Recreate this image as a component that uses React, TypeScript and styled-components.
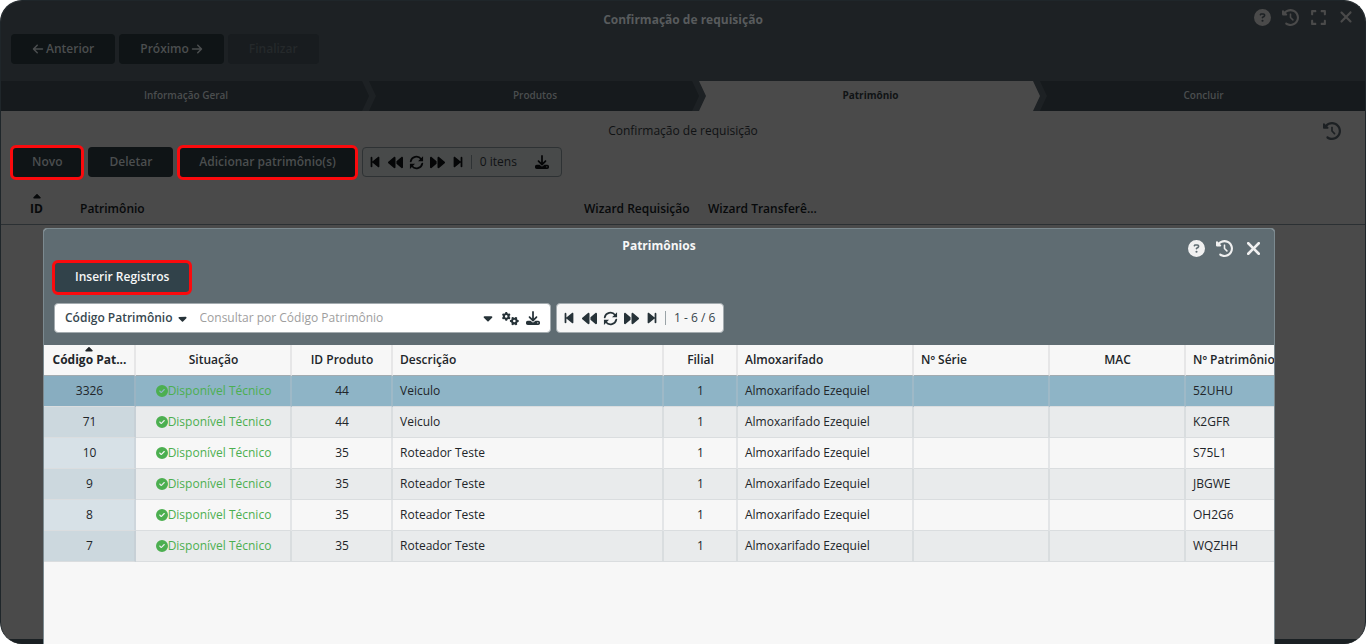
import React from 'react';
import styled, { createGlobalStyle, css } from 'styled-components';
import {
  FaArrowLeft,
  FaArrowRight,
  FaBackward,
  FaBackwardStep,
  FaCaretDown,
  FaCaretUp,
  FaCircleCheck,
  FaCircleQuestion,
  FaClockRotateLeft,
  FaDownload,
  FaExpand,
  FaForward,
  FaForwardStep,
  FaGears,
  FaXmark,
} from 'react-icons/fa6';

const GlobalStyle = createGlobalStyle`
  *, *::before, *::after { box-sizing: border-box; }
  body {
    margin: 0;
    background: #fff;
    font-family: "Open Sans", "Noto Sans", sans-serif;
    font-size: 12px;
    line-height: 16px;
  }
  button, input, select { font: inherit; }
`;

const Screen = styled.main`
  position: relative;
  display: flex;
  flex-direction: column;
  height: 100vh;
  overflow: hidden;
  border: 1px solid #1f262a;
  border-bottom: 0;
  border-radius: 22px;
  background: #4a4a4a;
`;

const BottomStrip = styled.div`
  flex: none;
  height: 5px;
  margin-top: auto;
  background: #1a2023;
`;

const Header = styled.header`
  position: relative;
  flex: none;
  height: 80px;
  padding: 11px 10px 10px;
  background: #1d2124;
`;

const HeaderTitle = styled.h1`
  margin: 0 0 6px;
  color: #585b5d;
  font-size: 12px;
  font-weight: 700;
  line-height: 16px;
  text-align: center;
`;

const IconButton = styled.button`
  display: flex;
  align-items: center;
  justify-content: center;
  flex: none;
  padding: 0;
  border: 0;
  background: none;
  color: inherit;
`;

const WindowIcons = styled.div<{ $tone: string; $top: number; $right: number }>`
  position: absolute;
  top: ${(p) => p.$top}px;
  right: ${(p) => p.$right}px;
  display: flex;
  align-items: center;
  gap: 10px;
  color: ${(p) => p.$tone};
  ${IconButton} { min-width: 18px; }
`;

const ButtonRow = styled.div<{ $gap?: number }>`
  display: flex;
  gap: ${(p) => p.$gap ?? 4}px;
`;

const highlight = css<{ $bright?: boolean }>`
  &::after {
    content: '';
    position: absolute;
    inset: -2px ${(p) => (p.$bright ? -2 : -1)}px -3px;
    border: 3px solid #fb0a0d;
    border-radius: 6px;
  }
`;

const ActionButton = styled.button<{ $marked?: boolean; $bright?: boolean }>`
  position: relative;
  display: flex;
  align-items: center;
  justify-content: center;
  gap: 2px;
  height: 30px;
  padding: 0 21px;
  border: 0;
  border-radius: 4px;
  background: ${(p) => (p.$bright ? '#31424a' : '#0f1416')};
  color: ${(p) => (p.$bright ? '#f7f7f7' : '#4b4e4f')};
  font-weight: 600;
  white-space: nowrap;
  &:disabled {
    background: #181c1f;
    color: #25292b;
  }
  ${(p) => p.$marked && highlight}
`;

const Steps = styled.ol`
  display: grid;
  grid-template-columns: 368fr 330fr 341fr 325fr;
  flex: none;
  height: 30px;
  margin: 0;
  padding: 0;
  list-style: none;
`;

const Step = styled.li<{ $current?: boolean }>`
  position: relative;
  display: flex;
  align-items: center;
  justify-content: center;
  padding: 0 0 2px 2px;
  background: ${(p) => (p.$current ? '#4a4a4a' : '#161a1d')};
  color: ${(p) => (p.$current ? '#101315' : '#4b4e4f')};
  font-size: 10px;
  font-weight: ${(p) => (p.$current ? 700 : 600)};
  &:not(:last-child)::after {
    content: '';
    position: absolute;
    z-index: 1;
    top: 0;
    right: -7px;
    width: 14px;
    height: 30px;
    background: #1d2124;
    clip-path: polygon(0 0, 50% 0, 100% 50%, 50% 100%, 0 100%, 50% 50%);
  }
`;

const SectionBar = styled.div`
  position: relative;
  flex: none;
  padding: 12px 0 8px;
  color: #101214;
  text-align: center;
`;

const Toolbar = styled.div`
  display: flex;
  flex: none;
  gap: 5px;
  padding: 0 10px;
`;

const Pager = styled.div<{ $dim?: boolean }>`
  display: flex;
  align-items: center;
  height: 30px;
  padding: 0 8px 0 5px;
  gap: 6px;
  border: 1px solid ${(p) => (p.$dim ? '#2e3234' : '#a3abaf')};
  border-radius: 4px;
  background: ${(p) => (p.$dim ? '#484a4a' : '#f7f7f7')};
  color: ${(p) => (p.$dim ? '#050607' : '#263238')};
`;

const PagerCount = styled.span<{ $dim?: boolean }>`
  display: flex;
  align-items: center;
  color: ${(p) => (p.$dim ? '#101214' : '#37454c')};
  white-space: nowrap;
  &::before {
    content: '';
    width: 1px;
    height: 14px;
    margin-right: 8px;
    background: ${(p) => (p.$dim ? '#2e3234' : '#9aa3a7')};
  }
`;

const DownloadSlot = styled.span`
  display: flex;
  padding: 0 4px 0 12px;
`;

const BackTable = styled.table`
  flex: none;
  width: 100%;
  margin-top: 12px;
  table-layout: fixed;
  border-collapse: collapse;
  border-bottom: 1px solid #2b3033;
  color: #07090a;
`;

const BackHead = styled.th<{ $w?: number; $center?: boolean }>`
  position: relative;
  width: ${(p) => (p.$w ? `${p.$w}px` : 'auto')};
  height: 35px;
  padding: 5px 8px 0;
  font-weight: ${(p) => (p.$center ? 700 : 600)};
  text-align: ${(p) => (p.$center ? 'center' : 'left')};
  white-space: nowrap;
`;

const SortMark = styled.span<{ $top: number }>`
  position: absolute;
  top: ${(p) => p.$top}px;
  left: 0;
  right: 0;
  display: flex;
  justify-content: center;
`;

const Dialog = styled.section`
  position: absolute;
  z-index: 2;
  inset: 227px 90px 0 42px;
  display: flex;
  flex-direction: column;
  overflow: hidden;
  border: 1px solid #7c8a90;
  border-bottom: 0;
  border-radius: 4px 4px 0 0;
  background: #f7f7f7;
`;

const DialogHead = styled.header`
  position: relative;
  display: flex;
  flex-direction: column;
  flex: none;
  height: 116px;
  padding: 9px 10px 0;
  background: #5f6c72;
`;

const DialogTitle = styled.h2`
  margin: 0 0 8px;
  color: #f7f7f7;
  font-size: 12px;
  font-weight: 700;
  line-height: 16px;
  text-align: center;
`;

const SearchRow = styled.form`
  display: flex;
  gap: 5px;
  margin-top: 11px;
`;

const SearchBox = styled.div`
  display: flex;
  align-items: center;
  gap: 7px;
  width: 497px;
  height: 30px;
  padding: 0 10px;
  border: 1px solid #a3abaf;
  border-radius: 4px;
  background: #fff;
  color: #263238;
`;

const FieldPicker = styled.label`
  display: flex;
  align-items: center;
  flex: none;
  gap: 3px;
`;

const FieldSelect = styled.select`
  appearance: none;
  field-sizing: content;
  padding: 0;
  border: 0;
  background: none;
  color: #37474f;
  font-weight: 600;
`;

const SearchInput = styled.input`
  flex: 1;
  min-width: 0;
  padding: 0 4px;
  border: 0;
  outline: 0;
  background: none;
  color: #263238;
  &::placeholder {
    color: #9e9e9e;
    opacity: 1;
  }
`;

const DataTable = styled.table`
  flex: none;
  width: 1300px;
  table-layout: fixed;
  border-collapse: separate;
  border-spacing: 0;
  color: #212529;
`;

const DataHead = styled.th<{ $center?: boolean; $sorted?: boolean; $w: number }>`
  position: relative;
  width: ${(p) => p.$w}px;
  height: 31px;
  padding: 0 ${(p) => (p.$center ? 6 : 7)}px 0 7px;
  border-right: 2px solid #e6e6e7;
  border-bottom: 1px solid #a2abb0;
  font-weight: ${(p) => (p.$sorted ? 700 : 600)};
  text-align: ${(p) => (p.$center ? 'center' : 'left')};
  white-space: nowrap;
`;

const DataCell = styled.td<{ $center?: boolean }>`
  height: 31px;
  padding: 0 ${(p) => (p.$center ? 6 : 7)}px 0 7px;
  border-right: 2px solid rgba(190, 196, 200, 0.35);
  border-bottom: 1px solid #dadddf;
  text-align: ${(p) => (p.$center ? 'center' : 'left')};
  white-space: nowrap;
`;

const DataRow = styled.tr`
  background: #f7f7f7;
  & > td:first-child { background: #d7e1e7; }
  &:nth-child(even) { background: #e9ebec; }
  &:nth-child(even) > td:first-child { background: #ccd8de; }
  &:first-child { background: #8eb4c6; }
  &:first-child > td:first-child { background: #88adc0; }
`;

const Status = styled.span`
  display: flex;
  align-items: center;
  justify-content: center;
  color: #4caf50;
`;

const columns = [
  { label: 'Código Pat...', width: 92, center: true, sorted: true },
  { label: 'Situação', width: 156, center: true },
  { label: 'ID Produto', width: 101, center: true },
  { label: 'Descrição', width: 271 },
  { label: 'Filial', width: 74, center: true },
  { label: 'Almoxarifado', width: 176 },
  { label: 'Nº Série', width: 136 },
  { label: 'MAC', width: 136, center: true },
  { label: 'Nº Patrimônio', width: 158 },
];

const assets = [
  { code: '3326', product: '44', name: 'Veiculo', tag: '52UHU' },
  { code: '71', product: '44', name: 'Veiculo', tag: 'K2GFR' },
  { code: '10', product: '35', name: 'Roteador Teste', tag: 'S75L1' },
  { code: '9', product: '35', name: 'Roteador Teste', tag: 'JBGWE' },
  { code: '8', product: '35', name: 'Roteador Teste', tag: 'OH2G6' },
  { code: '7', product: '35', name: 'Roteador Teste', tag: 'WQZHH' },
];

const RefreshIcon = () => (
  <svg width="15" height="15" viewBox="0 0 16 16" aria-hidden="true">
    <path
      d="M1.8 6.9A6.3 6.3 0 0 1 12.9 4.2M14.2 9.1A6.3 6.3 0 0 1 3.1 11.8"
      fill="none"
      stroke="currentColor"
      strokeWidth="1.8"
      strokeLinecap="round"
    />
    <path d="M15 1.2V6.6H9.6ZM1 14.8V9.4H6.4Z" fill="currentColor" />
  </svg>
);

const PagerButtons = () => (
  <>
    <IconButton type="button" aria-label="Primeira página"><FaBackwardStep size={14} /></IconButton>
    <IconButton type="button" aria-label="Página anterior"><FaBackward size={15} /></IconButton>
    <IconButton type="button" aria-label="Atualizar"><RefreshIcon /></IconButton>
    <IconButton type="button" aria-label="Próxima página"><FaForward size={15} /></IconButton>
    <IconButton type="button" aria-label="Última página"><FaForwardStep size={14} /></IconButton>
  </>
);

export default function App() {
  return (
    <>
      <GlobalStyle />
      <Screen>
        <Header>
          <HeaderTitle>Confirmação de requisição</HeaderTitle>
          <WindowIcons $tone="#4a4a4a" $top={7} $right={10}>
            <IconButton type="button" aria-label="Ajuda"><FaCircleQuestion size={17} /></IconButton>
            <IconButton type="button" aria-label="Histórico"><FaClockRotateLeft size={17} /></IconButton>
            <IconButton type="button" aria-label="Expandir"><FaExpand size={17} /></IconButton>
            <IconButton type="button" aria-label="Fechar"><FaXmark size={18} /></IconButton>
          </WindowIcons>
          <ButtonRow>
            <ActionButton type="button"><FaArrowLeft size={12} />Anterior</ActionButton>
            <ActionButton type="button">Próximo<FaArrowRight size={12} /></ActionButton>
            <ActionButton type="button" disabled>Finalizar</ActionButton>
          </ButtonRow>
        </Header>
        <Steps>
          <Step>Informação Geral</Step>
          <Step>Produtos</Step>
          <Step $current aria-current="step">Patrimônio</Step>
          <Step>Concluir</Step>
        </Steps>
        <SectionBar>
          Confirmação de requisição
          <WindowIcons $tone="#1c2023" $top={11} $right={24}>
            <IconButton type="button" aria-label="Histórico do registro"><FaClockRotateLeft size={18} /></IconButton>
          </WindowIcons>
        </SectionBar>
        <Toolbar>
          <ButtonRow $gap={5}>
            <ActionButton type="button" $marked>Novo</ActionButton>
            <ActionButton type="button">Deletar</ActionButton>
            <ActionButton type="button" $marked>Adicionar patrimônio(s)</ActionButton>
          </ButtonRow>
          <Pager $dim>
            <PagerButtons />
            <PagerCount $dim>0 itens</PagerCount>
            <DownloadSlot>
              <IconButton type="button" aria-label="Exportar"><FaDownload size={14} /></IconButton>
            </DownloadSlot>
          </Pager>
        </Toolbar>
        <BackTable>
          <thead>
            <tr>
              <BackHead $w={71} $center><SortMark $top={2}><FaCaretUp size={12} /></SortMark>ID</BackHead>
              <BackHead $w={504}>Patrimônio</BackHead>
              <BackHead $w={124}>Wizard Requisição</BackHead>
              <BackHead $w={125}>Wizard Transferê...</BackHead>
              <BackHead aria-hidden="true" />
            </tr>
          </thead>
        </BackTable>
        <BottomStrip />
        <Dialog role="dialog" aria-label="Patrimônios">
          <DialogHead>
            <DialogTitle>Patrimônios</DialogTitle>
            <WindowIcons $tone="#f0f0f0" $top={9} $right={10}>
              <IconButton type="button" aria-label="Ajuda"><FaCircleQuestion size={17} /></IconButton>
              <IconButton type="button" aria-label="Histórico"><FaClockRotateLeft size={17} /></IconButton>
              <IconButton type="button" aria-label="Fechar"><FaXmark size={21} /></IconButton>
            </WindowIcons>
            <ButtonRow>
              <ActionButton type="button" $marked $bright>Inserir Registros</ActionButton>
            </ButtonRow>
            <SearchRow>
              <SearchBox>
                <FieldPicker>
                  <FieldSelect aria-label="Campo de busca" defaultValue="codigo">
                    <option value="codigo">Código Patrimônio</option>
                  </FieldSelect>
                  <FaCaretDown size={13} />
                </FieldPicker>
                <SearchInput aria-label="Consultar" placeholder="Consultar por Código Patrimônio" />
                <IconButton type="button" aria-label="Opções"><FaCaretDown size={14} /></IconButton>
                <IconButton type="button" aria-label="Configurações"><FaGears size={17} /></IconButton>
                <IconButton type="button" aria-label="Exportar"><FaDownload size={14} /></IconButton>
              </SearchBox>
              <Pager>
                <PagerButtons />
                <PagerCount>1 - 6 / 6</PagerCount>
              </Pager>
            </SearchRow>
          </DialogHead>
          <DataTable>
            <thead>
              <tr>
                {columns.map((c) => (
                  <DataHead key={c.label} $w={c.width} $center={c.center} $sorted={c.sorted}>
                    {c.sorted && <SortMark $top={-1}><FaCaretUp size={12} /></SortMark>}
                    {c.label}
                  </DataHead>
                ))}
              </tr>
            </thead>
            <tbody>
              {assets.map((a) => (
                <DataRow key={a.code}>
                  <DataCell $center>{a.code}</DataCell>
                  <DataCell $center><Status><FaCircleCheck size={12} />Disponível Técnico</Status></DataCell>
                  <DataCell $center>{a.product}</DataCell>
                  <DataCell>{a.name}</DataCell>
                  <DataCell $center>1</DataCell>
                  <DataCell>Almoxarifado Ezequiel</DataCell>
                  <DataCell />
                  <DataCell />
                  <DataCell>{a.tag}</DataCell>
                </DataRow>
              ))}
            </tbody>
          </DataTable>
        </Dialog>
      </Screen>
    </>
  );
}
